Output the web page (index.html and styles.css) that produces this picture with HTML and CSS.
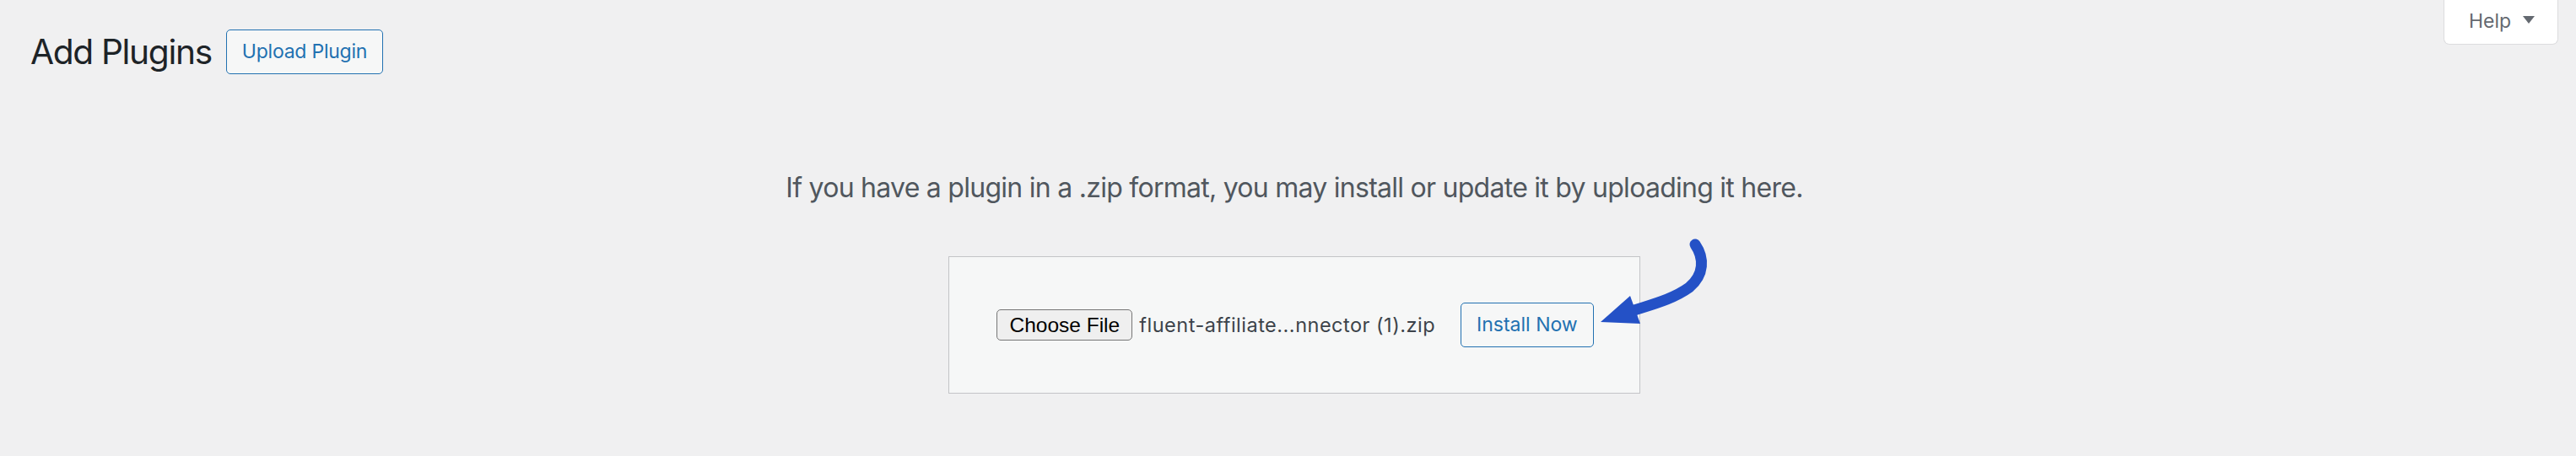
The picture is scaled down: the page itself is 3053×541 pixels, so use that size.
FILE: index.html
```html
<!DOCTYPE html>
<html lang="en">
<head>
<meta charset="utf-8">
<title>Add Plugins</title>
<link rel="stylesheet" href="styles.css">
</head>
<body>
<div class="screen-meta-links">
  <button class="help-tab" type="button">Help <span class="caret"></span></button>
</div>
<div class="wrap">
  <div class="title-row">
    <h1 class="page-title">Add Plugins</h1>
    <a class="title-action" href="#">Upload Plugin</a>
  </div>
  <div class="upload-plugin">
    <p class="install-help">If you have a plugin in a .zip format, you may install or update it by uploading it here.</p>
    <div class="form-holder">
      <form class="upload-form">
        <span class="file-input">
          <span class="file-btn">Choose File</span>
          <span class="file-name">fluent-affiliate...nnector (1).zip</span>
        </span>
        <button class="install-btn" type="button">Install Now</button>
      </form>
      <svg class="arrow" width="135" height="110" viewBox="0 0 135 110" aria-hidden="true">
        <path d="M117,10 C128,26 128,46 110,61 C92,74 70,80 45,88" fill="none" stroke="#2451c6" stroke-width="13" stroke-linecap="round"/>
        <polygon points="5,102 40,71 52,104" fill="#2451c6"/>
      </svg>
    </div>
  </div>
</div>
</body>
</html>
```

FILE: styles.css
```css
html, body {
  margin: 0;
  padding: 0;
  background: #f0f0f1;
  font-family: Inter, "Noto Sans", "DejaVu Sans", sans-serif;
  color: #3c434a;
}

.screen-meta-links {
  float: right;
  margin-right: 21px;
}

.help-tab {
  display: flex;
  align-items: center;
  gap: 14px;
  width: 136px;
  height: 53px;
  box-sizing: border-box;
  padding: 5px 0 7px 29px;
  margin: 0;
  background: #fff;
  border: 1px solid #dcdcde;
  border-top: none;
  border-radius: 0 0 7px 7px;
  font-family: Inter, "Noto Sans", sans-serif;
  font-size: 23px;
  line-height: 40px;
  color: #646970;
}

.caret {
  display: block;
  width: 0;
  height: 0;
  border-left: 7.5px solid transparent;
  border-right: 7.5px solid transparent;
  border-top: 9px solid #646970;
  margin-top: -4px;
}

.wrap {
  padding: 35px 21px 0 36px;
}

.title-row {
  display: flex;
  align-items: center;
  gap: 17px;
}

.page-title {
  margin: 0;
  font-size: 40.7px;
  font-weight: 400;
  line-height: 53px;
  letter-spacing: -0.033em;
  color: #1d2327;
}

.title-action {
  display: block;
  box-sizing: border-box;
  height: 53px;
  padding: 0 18px;
  border: 1px solid #2271b1;
  border-radius: 5px;
  background: #f6f7f7;
  color: #2271b1;
  font-size: 23px;
  line-height: 51px;
  letter-spacing: -0.01em;
  text-decoration: none;
}

.upload-plugin {
  text-align: center;
}

.install-help {
  margin: 113px 0 59px;
  font-size: 32px;
  line-height: 44px;
  letter-spacing: -0.023em;
  color: #50575e;
}

.form-holder {
  position: relative;
  display: inline-block;
}

.upload-form {
  display: flex;
  align-items: center;
  gap: 30px;
  padding: 54px 54px 54px 56px;
  background: #f6f7f7;
  border: 1px solid #c3c4c7;
}

.file-input {
  display: flex;
  align-items: center;
  gap: 8px;
}

.file-btn {
  display: block;
  box-sizing: border-box;
  width: 161px;
  height: 37px;
  border: 1px solid #767676;
  border-radius: 5px;
  background: #efefef;
  color: #000;
  font-family: "Liberation Sans", Arial, sans-serif;
  font-size: 24.5px;
  line-height: 35px;
  text-align: center;
}

.file-name {
  font-size: 23.5px;
  line-height: 37px;
  letter-spacing: 0.5px;
  color: #3c434a;
  white-space: nowrap;
}

.install-btn {
  display: block;
  box-sizing: border-box;
  height: 53px;
  padding: 0 18px;
  margin: 0;
  border: 1px solid #2271b1;
  border-radius: 5px;
  background: #f6f7f7;
  color: #2271b1;
  font-family: Inter, "Noto Sans", sans-serif;
  font-size: 23px;
  line-height: 51px;
}

.arrow {
  position: absolute;
  left: 768px;
  top: -24px;
}
```
